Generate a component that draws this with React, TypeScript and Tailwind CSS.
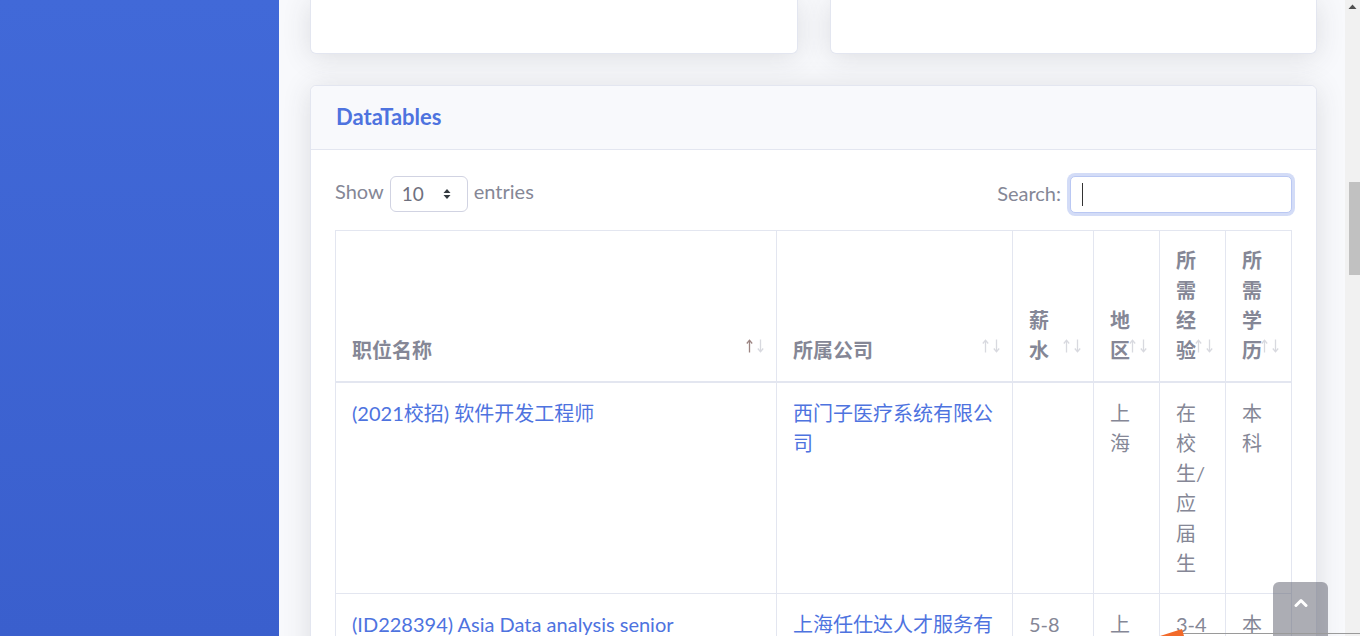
import React from "react";

type Col = { label: string; width: string; active?: boolean };

const cols: Col[] = [
  { label: "职位名称", width: "w-[441px]", active: true },
  { label: "所属公司", width: "w-[236px]" },
  { label: "薪水", width: "w-[81px]" },
  { label: "地区", width: "w-[66px]" },
  { label: "所需经验", width: "w-[66px]" },
  { label: "所需学历", width: "w-[66px]" },
];

const rows = [
  ["(2021校招) 软件开发工程师", "西门子医疗系统有限公司", "", "上海", "在校生/应届生", "本科"],
  ["(ID228394) Asia Data analysis senior supervisor-specialist", "上海任仕达人才服务有限公司", "5-8千/月", "上海", "3-4年", "本科"],
];

// sort arrows drawn like the DataTables ↑↓ glyphs
const SortIcons = ({ active }: { active?: boolean }) => (
  <svg className="absolute right-[11px] bottom-[28px]" width="19" height="14" viewBox="0 0 19 14">
    <g stroke={active ? "#9c8482" : "#d8d9df"} strokeWidth="1.3" fill="none">
      <path d="M3.5 1.5 V13.5" />
      <path d="M0.8 4.5 L3.5 1.3 L6.2 4.5" />
    </g>
    <g stroke="#d8d9df" strokeWidth="1.3" fill="none">
      <path d="M14.5 0.5 V12.5" />
      <path d="M11.8 9.5 L14.5 12.7 L17.2 9.5" />
    </g>
  </svg>
);

const App = () => {
  return (
    <div className="relative w-[1360px] h-[636px] overflow-hidden flex bg-[#f8f9fc] font-['Lato','Noto_Sans_CJK_SC',sans-serif] text-[20px] leading-[30px] text-[#858796]">
      {/* sidebar */}
      <div className="w-[279px] shrink-0 bg-gradient-to-b from-[#4169d8] to-[#3a5fcd]" />

      {/* main content */}
      <div className="flex-1 pl-[31px] pr-[28px]">
        <div className="grid grid-cols-2 gap-8">
          <div className="h-[54px] bg-white rounded-b-[6px] border-x border-b border-[#e3e6f0] shadow-[0_3px_28px_0_rgba(58,59,69,0.15)]" />
          <div className="h-[54px] bg-white rounded-b-[6px] border-x border-b border-[#e3e6f0] shadow-[0_3px_28px_0_rgba(58,59,69,0.15)]" />
        </div>

        <div className="mt-[31px] bg-white rounded-[6px] border border-[#e3e6f0] shadow-[0_3px_28px_0_rgba(58,59,69,0.15)]">
          <div className="h-[64px] flex items-center px-[25px] bg-[#f8f9fc] border-b border-[#e3e6f0] rounded-t-[6px]">
            <h6 className="text-[22px] font-bold text-[#4e73df] -mt-[2px]">DataTables</h6>
          </div>

          <div className="px-[24px] pt-[25px]">
            <div className="flex items-center justify-between h-[38px]">
              <div className="flex items-center gap-[6px]">
                <span className="mb-[6px]">Show</span>
                <div className="w-[78px] h-[36px] border border-[#d1d3e2] rounded-[6px] flex items-center justify-between pl-[11px] pr-[16px] text-[#6e707e] text-[19px]">
                  <span>10</span>
                  <svg width="8" height="12" viewBox="0 0 8 12">
                    <path d="M4 1 L7.5 5 H0.5 Z" fill="#343a40" />
                    <path d="M4 11 L7.5 7 H0.5 Z" fill="#343a40" />
                  </svg>
                </div>
                <span className="mb-[6px]">entries</span>
              </div>
              <div className="flex items-center gap-[9px]">
                <span className="mb-[2px]">Search:</span>
                <div className="w-[222px] h-[37px] border border-[#bac8f3] rounded-[5px] bg-white shadow-[0_0_0_3px_rgba(78,115,223,0.25)] flex items-center pl-[11px]">
                  <div className="w-[1px] h-[23px] bg-[#333]" />
                </div>
              </div>
            </div>

            <table className="mt-[17px] w-[956px] table-fixed border-collapse">
              <colgroup>
                {cols.map((c) => (
                  <col key={c.label} className={c.width} />
                ))}
              </colgroup>
              <thead>
                <tr>
                  {cols.map((c) => (
                    <th
                      key={c.label}
                      className="relative border border-[#e3e6f0] border-b-2 align-bottom text-left font-bold pl-4 pr-[30px] pt-[14px] pb-[16px]"
                    >
                      {c.label}
                      <SortIcons active={c.active} />
                    </th>
                  ))}
                </tr>
              </thead>
              <tbody>
                {rows.map((r, i) => (
                  <tr key={i}>
                    {r.map((v, j) => (
                      <td
                        key={j}
                        className={`border border-[#e3e6f0] align-top px-4 py-[15px] break-words ${
                          j < 2 ? "text-[#4e73df]" : ""
                        }`}
                      >
                        {v}
                      </td>
                    ))}
                  </tr>
                ))}
              </tbody>
            </table>
          </div>
        </div>
      </div>

      {/* browser scrollbar */}
      <div className="relative w-[15px] shrink-0 bg-[#f1f1f1]">
        <svg className="absolute left-[3px] top-[4px]" width="9" height="6" viewBox="0 0 9 6">
          <path d="M4.5 0.5 L8.5 5 H0.5 Z" fill="#505050" />
        </svg>
        <div className="absolute left-[4px] right-0 top-[182px] h-[93px] bg-[#c1c1c1]" />
      </div>

      {/* scroll to top */}
      <div className="absolute left-[1273px] top-[582px] w-[55px] h-[60px] rounded-[6px] bg-[rgba(90,92,105,0.5)] flex justify-center pt-[16px]">
        <svg width="14" height="9" viewBox="0 0 14 9">
          <path d="M2 7.5 L7 2.5 L12 7.5" stroke="white" strokeWidth="3" fill="none" strokeLinecap="round" strokeLinejoin="round" />
        </svg>
      </div>

      {/* overlay artefact */}
      <div className="absolute left-[1180px] right-0 top-[633px] h-[1px] bg-[#9a9a9a]" />
      <svg className="absolute left-[1160px] top-[629px]" width="24" height="7" viewBox="0 0 24 7">
        <path d="M0 7 L22 0 L24 7 Z" fill="#f26a2a" />
      </svg>
    </div>
  );
};

export default App;
